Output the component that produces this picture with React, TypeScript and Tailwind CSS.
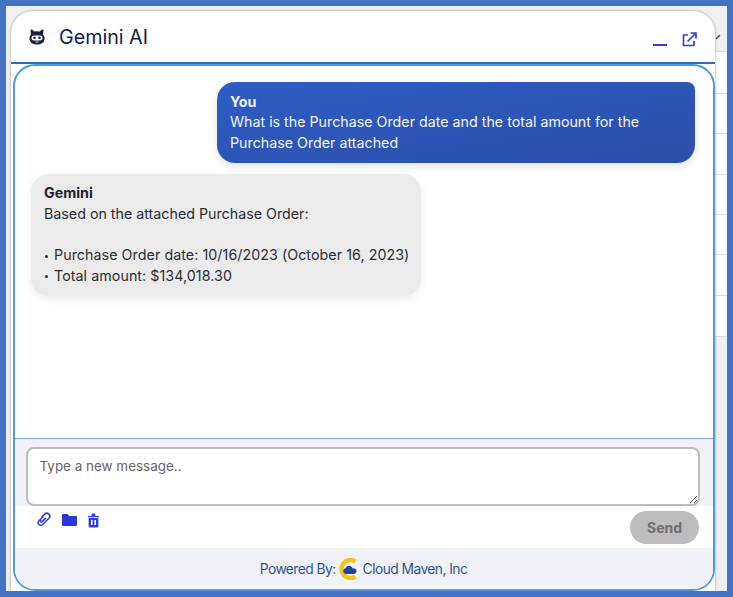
function Robot() {
  return (
    <svg width="18" height="18" viewBox="0 0 18 18" className="block">
      <path d="M2.500 2.500a1.300 1.300 0 0 1 2.300-.6L6 3.600Q9 2.800 12 3.600l1.200-1.700a1.300 1.300 0 0 1 2.300.6L15 6.500Q17 8.500 16.500 11.500 15.500 16.500 9 16.500 2.500 16.500 1.500 11.500 1 8.500 3 6.500Z" fill="#172040" />
      <rect x="3.500" y="7.500" width="11" height="5" rx="2.500" fill="#fff" />
      <circle cx="6.500" cy="9.800" r="1.300" fill="#172040" />
      <circle cx="11.500" cy="9.800" r="1.300" fill="#172040" />
      <path d="M7.500 14h3" stroke="#fff" strokeWidth="0.8" />
    </svg>
  );
}

function Clip() {
  return (
    <svg width="16" height="16" viewBox="0 0 16 16" fill="none" stroke="#3340d8" strokeWidth="1.6" strokeLinecap="round" className="block">
      <path d="M6.600 5.200 3 8.800a2.600 2.600 0 0 0 3.700 3.700l6.200-6.300a2.900 2.900 0 0 0-4.100-4.100L6 4.900" />
      <path d="M9.400 6.400 6 9.800a.9.9 0 0 1-1.300-1.200" />
    </svg>
  );
}

function Folder() {
  return (
    <svg width="15" height="14" viewBox="0 0 15 14" className="block">
      <path d="M0 2a1 1 0 0 1 1-1h4.500L7 3h7a1 1 0 0 1 1 1v8a1 1 0 0 1-1 1H1a1 1 0 0 1-1-1Z" fill="#2b38d6" />
    </svg>
  );
}

function Trash() {
  return (
    <svg width="13" height="15" viewBox="0 0 13 15" className="block">
      <path d="M1 3h3.600V1.600c0-.6.4-1 1-1h1.800c.6 0 1 .4 1 1V3H12v1.300H1Z" fill="#3340d8" />
      <path fillRule="evenodd" d="M1.600 5h9.800v8.200c0 .9-.6 1.400-1.400 1.400H3c-.8 0-1.400-.5-1.400-1.400ZM4 7v5h1.600V7Zm3.400 0v5H9V7Z" fill="#3340d8" />
    </svg>
  );
}

function Logo() {
  return (
    <svg width="21" height="22" viewBox="0 0 21 22" className="block">
      <path d="M16.500 3.500A9 9 0 1 0 16.500 18.500" fill="none" stroke="#f3c321" strokeWidth="4.500" />
      <path d="M7.500 16c-2 0-3.300-1.300-3.300-2.900 0-1.500 1-2.600 2.400-2.800C7.100 8.800 8.400 7.800 10 7.800c1.700 0 3 1.100 3.400 2.500.3-.1.600-.1.900-.1 1.900 0 3.300 1.300 3.300 2.900S16.200 16 14.300 16Z" fill="#1f4596" />
    </svg>
  );
}

function Bullet() {
  return <span className="ml-[1px] mr-[6px] inline-block h-[3px] w-[3px] rounded-full bg-[#2a2d36] align-middle" />;
}

const rows = [42, 40, 41, 40, 40, 41, 41];

export default function App() {
  return (
    <div className="w-[733px] h-[597px] overflow-hidden bg-[#4472c4] p-[6px] [font-family:Inter,'Liberation_Sans',sans-serif]">
      <div className="relative h-[585px] w-[721px] overflow-hidden bg-[#f1f0f0]">
        {/* the page behind the chat window */}
        <div className="ml-[100px] flex flex-col pt-[45px]">
          {rows.map((h, i) => (
            <div key={i} style={{ height: h }} className="border-t border-[#dedede] bg-white" />
          ))}
          <div className="border-t border-[#dedede]" />
        </div>
        <svg width="6" height="6" viewBox="0 0 6 6" className="absolute left-[709px] top-[28px]">
          <path d="M1 5 5 1" stroke="#3340d8" strokeWidth="1.5" fill="none" />
        </svg>
        {/* the chat window */}
        <div className="absolute left-[5px] top-[5px] flex h-[580px] w-[704px] flex-col rounded-t-[22px] bg-white shadow-[0_0_3px_rgba(0,0,0,0.35)]">
          <div className="flex h-[53px] shrink-0 items-center justify-between border-b-2 border-[#2a6ad0] pl-[17px] pr-[18px]">
            <div className="flex items-center gap-[13px] pt-[2px]">
              <Robot />
              <span className="text-[19.7px] leading-none text-[#14204a]">Gemini AI</span>
            </div>
            <div className="flex items-end gap-[15px] pt-[6px]">
              <span className="mb-[1px] block h-[2px] w-[14px] bg-[#3340d8]" />
              <svg width="15" height="15" viewBox="0 0 15 15" fill="none" stroke="#3340d8" strokeWidth="1.700" className="block">
                <path d="M6 3H1.500v10.500H12V9" />
                <path d="M5.500 9.500 13.500 1.500M8.500 1h5.500v5.500" />
              </svg>
            </div>
          </div>
          <div className="ml-[1.5px] flex min-h-0 w-[702px] flex-1 flex-col overflow-hidden rounded-[22px] border-2 border-[#4f9bdc] bg-white">
            <div className="flex h-[372px] shrink-0 flex-col gap-[11px] pl-[16.5px] pt-[16px] text-[14.25px] leading-[20.6px]">
              <div className="ml-[186px] w-[478px] rounded-[18px] rounded-tr-[8px] bg-gradient-to-br from-[#2f5cc4] to-[#2a4fa8] px-[13px] py-[9.5px] text-[#f1f4fb] shadow-[0_3px_8px_rgba(0,0,0,0.12)]">
                <div className="font-bold">You</div>
                <div>What is the Purchase Order date and the total amount for the Purchase Order attached</div>
              </div>
              <div className="w-[390px] rounded-[18px] bg-[#ebebeb] px-[13px] py-[9.5px] text-[#2a2d36] shadow-[0_3px_8px_rgba(0,0,0,0.08)]">
                <div className="font-bold text-[#1d2230]">Gemini</div>
                <div>Based on the attached Purchase Order:</div>
                <div className="h-[20.6px]" />
                <div className="whitespace-nowrap tracking-[0.06px]">
                  <Bullet />
                  Purchase Order date: 10/16/2023 (October 16, 2023)
                </div>
                <div className="whitespace-nowrap tracking-[0.06px]">
                  <Bullet />
                  Total amount: $134,018.30
                </div>
              </div>
            </div>
            <div className="h-[68px] shrink-0 border-t border-[#6fb1e3] bg-[#f1f2f7] pl-[11.5px] pt-[8px]">
              <textarea
                readOnly
                placeholder="Type a new message.."
                className="block h-[59px] w-[674px] rounded-[8px] border-2 border-[#bdbdbd] bg-white px-[11.5px] py-[7px] text-[13.45px] leading-[20px] outline-none placeholder:text-[#666]"
              />
            </div>
            <div className="flex h-[42px] shrink-0 items-start justify-between bg-white pl-[21.5px] pr-[13.5px]">
              <div className="flex items-center gap-[10px] pt-[6px]">
                <Clip />
                <Folder />
                <Trash />
              </div>
              <button className="mt-[5px] h-[33px] w-[69px] rounded-full bg-[#bdbdbd] text-[14px] font-bold text-[#6f6f6f]">Send</button>
            </div>
            <div className="flex flex-1 items-center justify-center gap-[3px] border-t border-[#eceef2] bg-[#f1f2f7] text-[13.8px] tracking-[-0.55px] text-[#2f5296]">
              <span>Powered By:</span>
              <Logo />
              <span>Cloud Maven, Inc</span>
            </div>
          </div>
        </div>
      </div>
    </div>
  );
}
